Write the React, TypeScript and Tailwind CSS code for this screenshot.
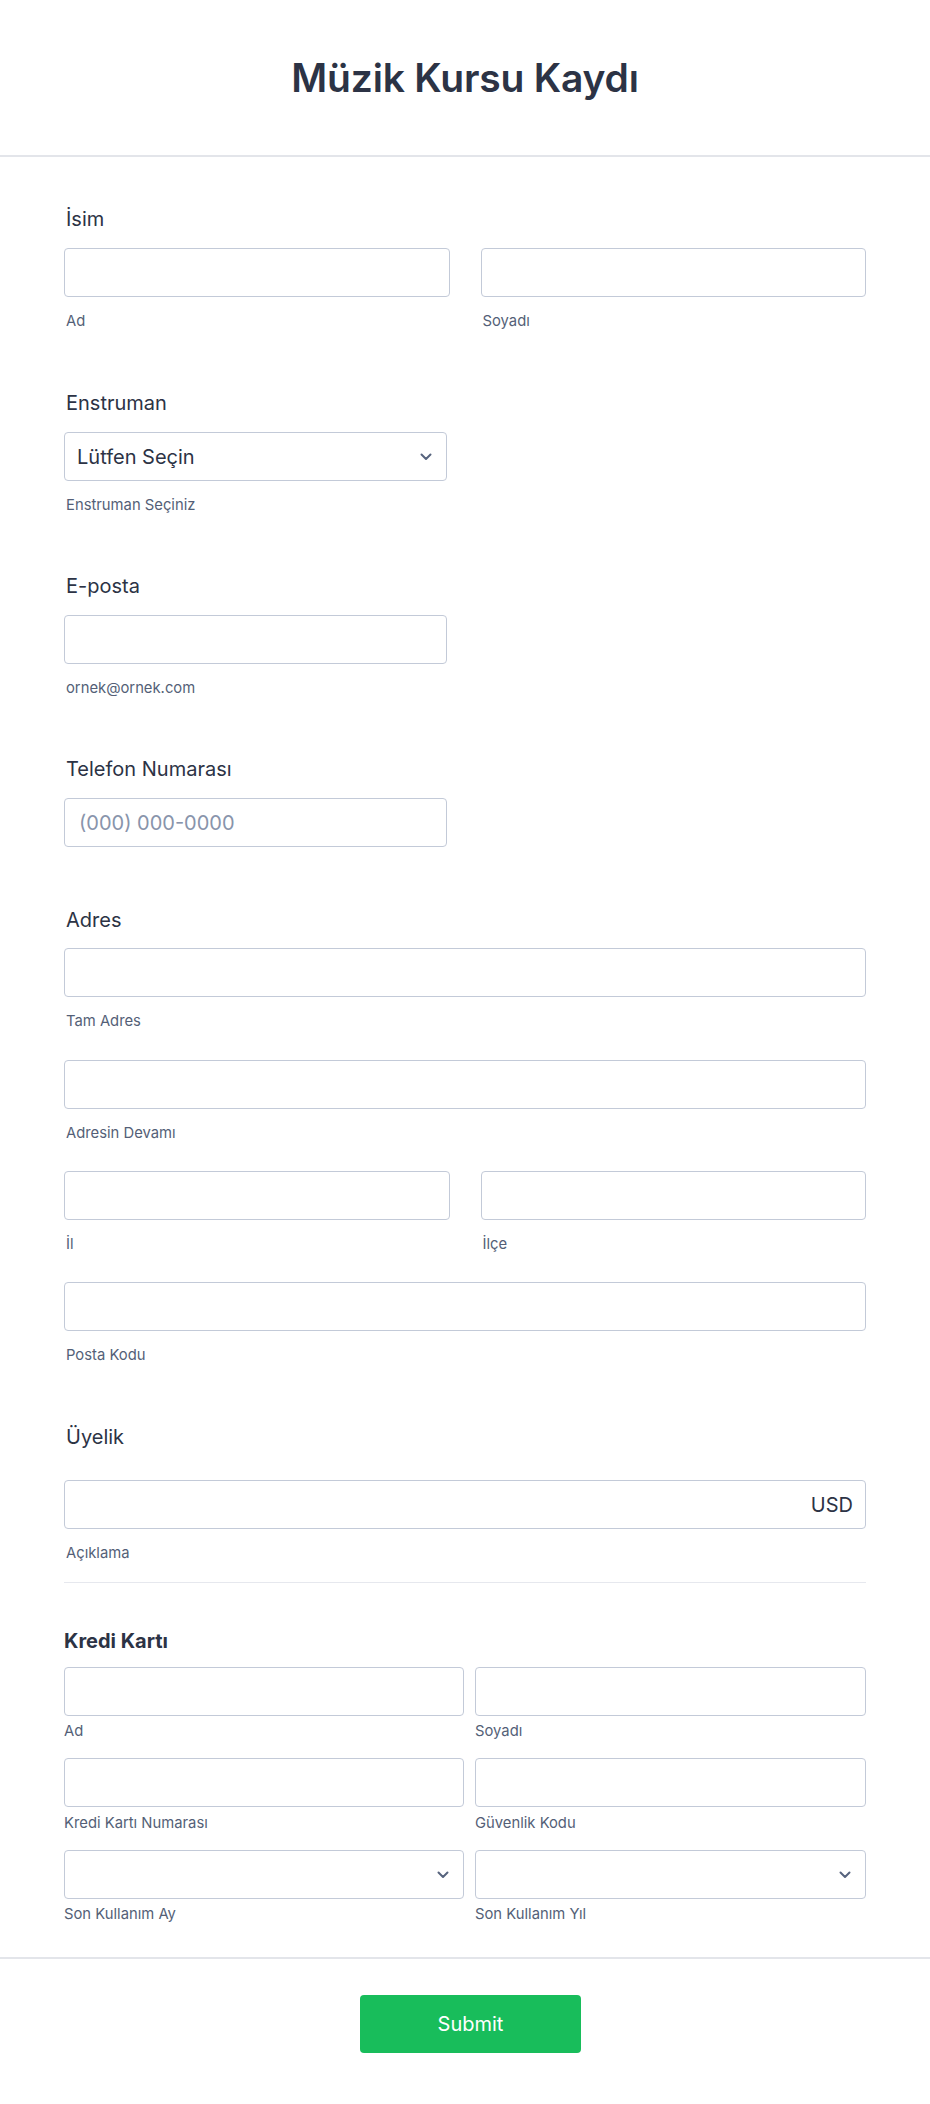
import React from "react";

const labelCls = "text-[20px] leading-[24px] text-[#2c3345] pl-[2px]";
const subCls = "text-[14.8px] leading-[20px] text-[#545f77] pl-[2px]";
const ccSub = "text-[14.8px] leading-[20px] text-[#545f77]";
const boxCls =
  "block w-full h-[49px] border border-[#c3cad8] rounded-[4px] bg-white outline-none px-[14px] text-[20px] text-[#2c3345]";

function Chevron() {
  return (
    <svg width="12" height="8" viewBox="0 0 12 8" className="shrink-0">
      <polyline
        points="1.5,1.5 6,6 10.5,1.5"
        fill="none"
        stroke="#57647e"
        strokeWidth="2"
        strokeLinecap="round"
        strokeLinejoin="round"
      />
    </svg>
  );
}

function SelectBox({ text, right = 16 }: { text?: string; right?: number }) {
  return (
    <div className="relative h-[49px] border border-[#c3cad8] rounded-[4px] bg-white flex items-center pl-[12px]">
      <span className="text-[20px] text-[#2c3345]">{text}</span>
      <div className="absolute top-1/2 -translate-y-1/2" style={{ right }}>
        <Chevron />
      </div>
    </div>
  );
}

export default function App() {
  return (
    <div className="w-[930px] min-h-[2104px] bg-white font-['Inter',sans-serif]">
      <header className="h-[157px] border-b-2 border-[#e3e5ea] flex items-center justify-center">
        <h1 className="text-[39px] leading-[48px] font-semibold text-[#2c3345] tracking-[-0.2px]">
          Müzik Kursu Kaydı
        </h1>
      </header>

      <main className="px-[64px] pt-[50px] pb-[33px]">
        {/* İsim */}
        <div>
          <div className={labelCls}>İsim</div>
          <div className="mt-[17px] grid grid-cols-2 gap-x-[31px]">
            <div>
              <input className={boxCls} />
              <div className={subCls + " mt-[14px]"}>Ad</div>
            </div>
            <div>
              <input className={boxCls} />
              <div className={subCls + " mt-[14px]"}>Soyadı</div>
            </div>
          </div>
        </div>

        {/* Enstruman */}
        <div className="mt-[60px] w-[383px]">
          <div className={labelCls}>Enstruman</div>
          <div className="mt-[17px]">
            <SelectBox text="Lütfen Seçin" right={14} />
          </div>
          <div className={subCls + " mt-[14px]"}>Enstruman Seçiniz</div>
        </div>

        {/* E-posta */}
        <div className="mt-[59px] w-[383px]">
          <div className={labelCls}>E-posta</div>
          <input className={boxCls + " mt-[17px]"} />
          <div className={subCls + " mt-[14px]"}>ornek@ornek.com</div>
        </div>

        {/* Telefon */}
        <div className="mt-[59px] w-[383px]">
          <div className={labelCls}>Telefon Numarası</div>
          <input
            className={boxCls + " mt-[17px] placeholder:text-[#8894ab]"}
            placeholder="(000) 000-0000"
          />
        </div>

        {/* Adres */}
        <div className="mt-[61px]">
          <div className={labelCls}>Adres</div>
          <input className={boxCls + " mt-[16px]"} />
          <div className={subCls + " mt-[14px]"}>Tam Adres</div>
          <input className={boxCls + " mt-[29px]"} />
          <div className={subCls + " mt-[14px]"}>Adresin Devamı</div>
          <div className="mt-[28px] grid grid-cols-2 gap-x-[31px]">
            <div>
              <input className={boxCls} />
              <div className={subCls + " mt-[14px]"}>İl</div>
            </div>
            <div>
              <input className={boxCls} />
              <div className={subCls + " mt-[14px]"}>İlçe</div>
            </div>
          </div>
          <input className={boxCls + " mt-[28px]"} />
          <div className={subCls + " mt-[14px]"}>Posta Kodu</div>
        </div>

        {/* Üyelik */}
        <div className="mt-[60px]">
          <div className={labelCls}>Üyelik</div>
          <div className="mt-[31px] h-[49px] border border-[#c3cad8] rounded-[4px] bg-white flex items-center justify-end pr-[12px]">
            <span className="text-[20px] text-[#2c3345]">USD</span>
          </div>
          <div className={subCls + " mt-[14px]"}>Açıklama</div>
          <div className="mt-[19px] border-t border-[#e6e8ee]" />
        </div>

        {/* Kredi Kartı */}
        <div className="mt-[46px]">
          <div className="text-[20px] leading-[24px] font-bold text-[#2c3345]">Kredi Kartı</div>
          <div className="mt-[14px] grid grid-cols-[400px_1fr] gap-x-[11px]">
            <div>
              <input className={boxCls} />
              <div className={ccSub + " mt-[5px]"}>Ad</div>
            </div>
            <div>
              <input className={boxCls} />
              <div className={ccSub + " mt-[5px]"}>Soyadı</div>
            </div>
            <div className="mt-[17px]">
              <input className={boxCls} />
              <div className={ccSub + " mt-[6px]"}>Kredi Kartı Numarası</div>
            </div>
            <div className="mt-[17px]">
              <input className={boxCls} />
              <div className={ccSub + " mt-[6px]"}>Güvenlik Kodu</div>
            </div>
            <div className="mt-[17px]">
              <SelectBox right={14} />
              <div className={ccSub + " mt-[5px]"}>Son Kullanım Ay</div>
            </div>
            <div className="mt-[17px]">
              <SelectBox right={14} />
              <div className={ccSub + " mt-[5px]"}>Son Kullanım Yıl</div>
            </div>
          </div>
        </div>
      </main>

      <footer className="border-t-2 border-[#e3e5ea] pt-[36px] flex justify-center pl-[11px]">
        <button className="w-[221px] h-[58px] rounded-[4px] bg-[#18bd5b] text-white text-[20px]">
          Submit
        </button>
      </footer>
    </div>
  );
}
